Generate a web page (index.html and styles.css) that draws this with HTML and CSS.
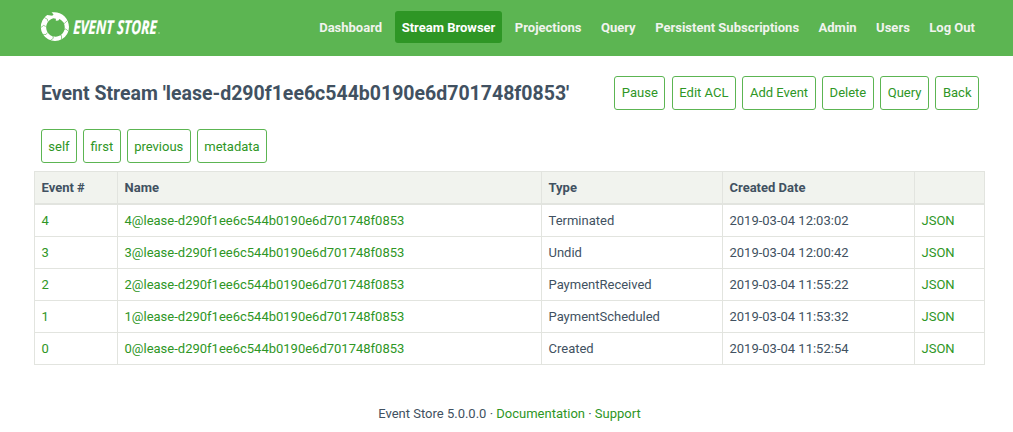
FILE: index.html
```html
<!DOCTYPE html>
<html lang="en">
<head>
<meta charset="utf-8">
<title>Event Store</title>
<link rel="stylesheet" href="styles.css">
</head>
<body>
<header class="header">
  <svg class="logo" width="124" height="32" viewBox="0 0 124 32" role="img" aria-label="Event Store">
    <path class="ring" fill-rule="evenodd" d="M11.5 1.4C20 -.2 29 6 29 16A14.1 14.1 0 1 1 7.2 4.1L12.3 4.7L13.6 3.2ZM13.4 7.3A9.3 9.3 0 1 0 19.5 8L18.3 9.4L15.8 9.7L15.9 7.8Z"/>
    <path class="cuts" d="M22.5 11.5L24.3 12.5L27.5 9.5M23.5 18.5L25.8 18L28.8 20.5M19.8 23.5L21.5 24.6L21.5 28.4M13 25L13.3 27.3L10.2 29.6M7.4 21.5L6 23.5L2 23.4M5.8 15.5L3.7 14.4L.7 16.6M7.8 10.4L7.4 8.2L4.2 6.5"/>
    <text class="wordmark" transform="translate(33 22.9) skewX(-2) scale(.72 1)" textLength="116" lengthAdjust="spacingAndGlyphs">EVENT STORE</text>
    <circle class="mark" cx="119" cy="22" r=".7"/>
  </svg>
  <nav class="nav">
    <a>Dashboard</a>
    <a class="active">Stream Browser</a>
    <a>Projections</a>
    <a>Query</a>
    <a>Persistent Subscriptions</a>
    <a>Admin</a>
    <a>Users</a>
    <a>Log Out</a>
  </nav>
</header>
<main class="main">
  <div class="title-row">
    <h1 class="title">Event Stream 'lease-d290f1ee6c544b0190e6d701748f0853'</h1>
    <div class="buttons">
      <a class="btn">Pause</a>
      <a class="btn">Edit ACL</a>
      <a class="btn">Add Event</a>
      <a class="btn">Delete</a>
      <a class="btn">Query</a>
      <a class="btn">Back</a>
    </div>
  </div>
  <div class="buttons pager">
    <a class="btn">self</a>
    <a class="btn">first</a>
    <a class="btn">previous</a>
    <a class="btn">metadata</a>
  </div>
  <table class="events">
    <colgroup><col class="c-num"><col class="c-name"><col class="c-type"><col class="c-date"><col class="c-json"></colgroup>
    <thead><tr><th>Event #</th><th>Name</th><th>Type</th><th>Created Date</th><th></th></tr></thead>
    <tbody>
      <tr><td><a>4</a></td><td><a>4@lease-d290f1ee6c544b0190e6d701748f0853</a></td><td>Terminated</td><td>2019-03-04 12:03:02</td><td><a>JSON</a></td></tr>
      <tr><td><a>3</a></td><td><a>3@lease-d290f1ee6c544b0190e6d701748f0853</a></td><td>Undid</td><td>2019-03-04 12:00:42</td><td><a>JSON</a></td></tr>
      <tr><td><a>2</a></td><td><a>2@lease-d290f1ee6c544b0190e6d701748f0853</a></td><td>PaymentReceived</td><td>2019-03-04 11:55:22</td><td><a>JSON</a></td></tr>
      <tr><td><a>1</a></td><td><a>1@lease-d290f1ee6c544b0190e6d701748f0853</a></td><td>PaymentScheduled</td><td>2019-03-04 11:53:32</td><td><a>JSON</a></td></tr>
      <tr><td><a>0</a></td><td><a>0@lease-d290f1ee6c544b0190e6d701748f0853</a></td><td>Created</td><td>2019-03-04 11:52:54</td><td><a>JSON</a></td></tr>
    </tbody>
  </table>
</main>
<footer class="footer">Event Store 5.0.0.0 · <a>Documentation</a> · <a>Support</a></footer>
</body>
</html>
```

FILE: styles.css
```css
* { box-sizing: border-box; }
body {
  margin: 0;
  background: #fff;
  color: #415161;
  font: 13px/18px Roboto, "Liberation Sans", sans-serif;
}
a { color: #2e9625; text-decoration: none; }
.header {
  display: flex;
  justify-content: space-between;
  height: 56px;
  padding: 11px 31px 0 40px;
  background: #5cb552;
}
.logo { display: block; overflow: visible; }
.ring, .wordmark, .mark { fill: #fff; }
.mark { opacity: .6; }
.cuts { fill: none; stroke: #5cb552; stroke-width: .65; }
.wordmark { font: italic 700 19px "Open Sans", sans-serif; stroke: #fff; stroke-width: .2; }
.nav { display: flex; gap: 5.5px; }
.nav a {
  height: 32px;
  padding: 0 7px;
  border-radius: 3px;
  color: #f1f3ee;
  font-weight: 700;
  line-height: 33px;
}
.nav .active { background: #2e9625; color: #fff; }
.main { padding: 20px 28px 0 34px; }
.title-row {
  display: flex;
  justify-content: space-between;
  height: 34px;
  padding: 0 6px 0 7px;
}
.title { margin: 0; font-size: 19.5px; font-weight: 700; line-height: 36px; }
.buttons { display: flex; gap: 6.5px; }
.btn {
  height: 34px;
  padding: 0 6.5px;
  border: 1px solid #5cb552;
  border-radius: 3px;
  line-height: 32px;
}
.pager { gap: 6.2px; margin: 19px 0 8px 7px; }
.pager .btn { line-height: 34px; padding: 0 6.5px 0 6.3px; }
.events {
  width: 951px;
  border-left: 1px solid #e2e4df;
  border-spacing: 0;
  table-layout: fixed;
}
.c-num { width: 83px; }
.c-name { width: 424px; }
.c-type { width: 181px; }
.c-date { width: 192px; }
.c-json { width: 70px; }
.events th, .events td {
  height: 32px;
  padding: 0 6.5px;
  border: solid #e2e4df;
  border-width: 0 1px 1px 0;
  text-align: left;
}
.events th {
  height: 34px;
  background: #f1f3ee;
  border-width: 1px 1px 2px 0;
  font-weight: 700;
}
.footer { margin-top: 40px; text-align: center; padding-left: 6px; }
```
